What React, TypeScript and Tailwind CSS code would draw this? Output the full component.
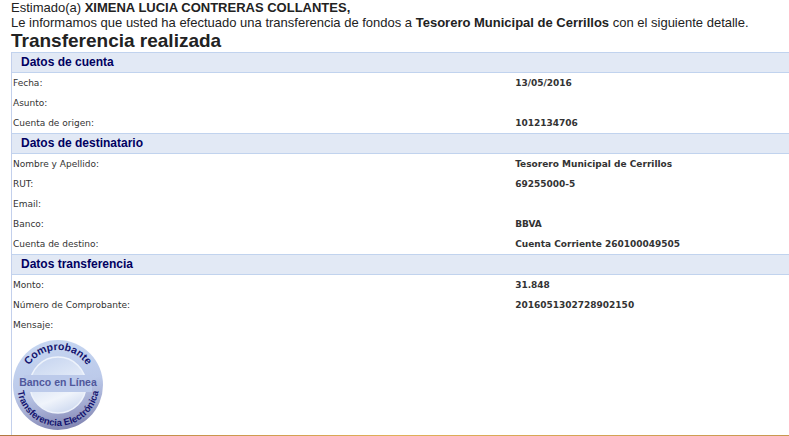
type Row = { label: string; value?: string };
type Section = { title: string; rows: Row[] };

const sections: Section[] = [
  {
    title: "Datos de cuenta",
    rows: [
      { label: "Fecha:", value: "13/05/2016" },
      { label: "Asunto:" },
      { label: "Cuenta de origen:", value: "1012134706" },
    ],
  },
  {
    title: "Datos de destinatario",
    rows: [
      { label: "Nombre y Apellido:", value: "Tesorero Municipal de Cerrillos" },
      { label: "RUT:", value: "69255000-5" },
      { label: "Email:" },
      { label: "Banco:", value: "BBVA" },
      { label: "Cuenta de destino:", value: "Cuenta Corriente 260100049505" },
    ],
  },
  {
    title: "Datos transferencia",
    rows: [
      { label: "Monto:", value: "31.848" },
      { label: "Número de Comprobante:", value: "2016051302728902150" },
      { label: "Mensaje:" },
    ],
  },
];

function Stamp() {
  return (
    <svg
      className="block h-[92px] w-[92px] overflow-visible font-['Liberation_Sans',Arial,sans-serif] font-bold"
      viewBox="0 0 92 92"
      role="img"
      aria-label="Comprobante Banco en Línea Transferencia Electrónica"
    >
      <defs>
        <linearGradient id="ring" x1="0.4" y1="0" x2="0.6" y2="1">
          <stop offset="0" stopColor="#c6d6f1" />
          <stop offset="0.5" stopColor="#bccaea" />
          <stop offset="0.75" stopColor="#a4acd2" />
          <stop offset="1" stopColor="#8083b1" />
        </linearGradient>
        <linearGradient id="disc" x1="0.3" y1="0" x2="0.7" y2="1">
          <stop offset="0" stopColor="#c8d6f0" />
          <stop offset="0.4" stopColor="#dde6f6" />
          <stop offset="0.7" stopColor="#f0f4fb" />
          <stop offset="1" stopColor="#ccd8ef" />
        </linearGradient>
        <path id="arcTop" d="M 11 46 A 35 35 0 0 1 81 46" />
        <path id="arcBottom" d="M 5 46 A 41 41 0 0 0 87 46" />
      </defs>
      <circle cx="46" cy="46" r="45" fill="url(#ring)" />
      <circle cx="46" cy="46" r="28" fill="url(#disc)" stroke="#eef3fb" strokeWidth="1.5" />
      <rect x="12" y="36" width="68" height="17" fill="#bccaea" />
      <text x="46" y="47" textAnchor="middle" fontSize="10.5" fill="#50589c">
        Banco en Línea
      </text>
      <text fontSize="10.5" fill="#14146e">
        <textPath href="#arcTop" startOffset="50%" textAnchor="middle">
          Comprobante
        </textPath>
      </text>
      <text fontSize="9.5" fill="#14146e">
        <textPath href="#arcBottom" startOffset="50%" textAnchor="middle">
          Transferencia Electrónica
        </textPath>
      </text>
    </svg>
  );
}

export default function App() {
  return (
    <main className="overflow-hidden bg-white pl-[11px] font-['Liberation_Sans',Arial,sans-serif] text-[#222222]">
      <p className="text-[13px] leading-[15px]">
        Estimado(a) <b>XIMENA LUCIA CONTRERAS COLLANTES,</b>
        <br />
        Le informamos que usted ha efectuado una transferencia de fondos a{" "}
        <b>Tesorero Municipal de Cerrillos</b> con el siguiente detalle.
      </p>
      <h1 className="pb-px text-[19px] leading-[21px] font-bold">Transferencia realizada</h1>
      <div className="border-l border-[#c3d0ec]">
        <table className="w-full table-fixed border-separate border-spacing-0">
          <colgroup>
            <col className="w-[64.5%]" />
            <col />
          </colgroup>
          {sections.map((section) => (
            <tbody key={section.title}>
              <tr>
                <th
                  colSpan={2}
                  scope="colgroup"
                  className="h-[21px] border-y border-[#c1d3ee] bg-[#e2e9f5] px-[9px] text-left text-[12px] leading-[19px] font-bold text-[#000060]"
                >
                  {section.title}
                </th>
              </tr>
              {section.rows.map((row) => (
                <tr
                  key={row.label}
                  className="h-5 font-['DejaVu_Sans',Verdana,sans-serif] text-[9px] leading-5 text-[#333333]"
                >
                  <th scope="row" className="px-px text-left font-normal">
                    {row.label}
                  </th>
                  <td className="px-0.5 font-bold">{row.value}</td>
                </tr>
              ))}
            </tbody>
          ))}
        </table>
        <div className="py-1">
          <Stamp />
        </div>
      </div>
      <div className="-ml-[11px] h-px bg-linear-to-r from-[#b07840] via-[#e0b058] to-[#c89850]" />
    </main>
  );
}
